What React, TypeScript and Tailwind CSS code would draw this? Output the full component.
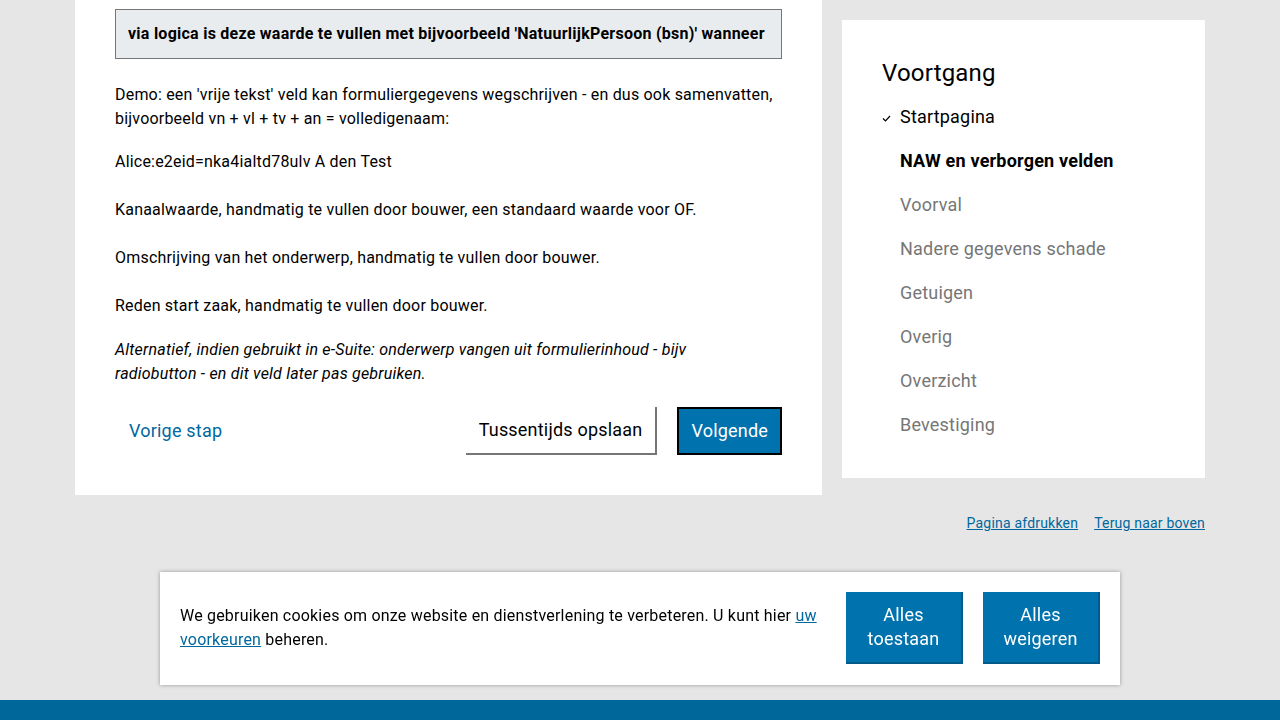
import React from 'react'

const steps = [
  { label: 'Startpagina', state: 'done' },
  { label: 'NAW en verborgen velden', state: 'current' },
  { label: 'Voorval', state: 'todo' },
  { label: 'Nadere gegevens schade', state: 'todo' },
  { label: 'Getuigen', state: 'todo' },
  { label: 'Overig', state: 'todo' },
  { label: 'Overzicht', state: 'todo' },
  { label: 'Bevestiging', state: 'todo' },
]

function Check() {
  return (
    <svg width="9" height="7" viewBox="0 0 9 7" className="mt-[3px]">
      <path d="M1 3.5 L3.5 6 L8 1" fill="none" stroke="#000" strokeWidth="1.2" />
    </svg>
  )
}

export default function App() {
  return (
    <div className="h-[720px] overflow-hidden bg-[#e6e6e6] font-['Roboto',sans-serif] tracking-[0.2px] text-black">
      <div className="mx-auto flex w-[1130px] items-start gap-5">
        {/* main form */}
        <main className="w-[747px] bg-white px-10 pb-10 pt-[9px]">
          <div className="overflow-hidden whitespace-nowrap border border-[#767676] bg-[#e9ecef] px-3 py-[12px] text-base font-bold leading-6 tracking-[0.25px]">
            via logica is deze waarde te vullen met bijvoorbeeld 'NatuurlijkPersoon (bsn)' wanneer
          </div>

          <p className="mt-6 text-base leading-6">
            Demo: een 'vrije tekst' veld kan formuliergegevens wegschrijven - en dus ook samenvatten,
            bijvoorbeeld vn + vl + tv + an = volledigenaam:
          </p>

          <div className="mt-[19px] space-y-6 text-base leading-6">
            <p>Alice:e2eid=nka4ialtd78ulv A den Test</p>
            <p>Kanaalwaarde, handmatig te vullen door bouwer, een standaard waarde voor OF.</p>
            <p>Omschrijving van het onderwerp, handmatig te vullen door bouwer.</p>
            <p>Reden start zaak, handmatig te vullen door bouwer.</p>
          </div>

          <p className="mt-5 text-base italic leading-6">
            Alternatief, indien gebruikt in e-Suite: onderwerp vangen uit formulierinhoud - bijv
            <br />
            radiobutton - en dit veld later pas gebruiken.
          </p>

          <div className="mt-[21px] flex items-center">
            <a href="#" className="px-[14px] text-lg text-[#00689e]">Vorige stap</a>
            <div className="ml-auto flex items-center gap-5">
              <button className="h-12 border-b-2 border-r-2 border-[#767676] bg-white px-[13px] text-lg">
                Tussentijds opslaan
              </button>
              <button className="h-12 border-2 border-black bg-[#0073ae] px-3 text-lg text-white">
                Volgende
              </button>
            </div>
          </div>
        </main>

        {/* progress sidebar */}
        <aside className="mt-5 w-[363px] bg-white px-10 pb-[31px] pt-[37px]">
          <h2 className="text-2xl leading-8">Voortgang</h2>
          <ul className="mt-[6px]">
            {steps.map((s) => (
              <li key={s.label} className="flex h-11 items-center text-lg">
                <span className="flex w-[18px] items-center">{s.state === 'done' && <Check />}</span>
                <span
                  className={
                    s.state === 'current'
                      ? 'font-bold text-black'
                      : s.state === 'done'
                        ? 'text-black'
                        : 'text-[#767676]'
                  }
                >
                  {s.label}
                </span>
              </li>
            ))}
          </ul>
        </aside>
      </div>

      <div className="mx-auto mt-[18px] flex w-[1130px] justify-end gap-4 text-sm leading-5">
        <a href="#" className="text-[#00689e] underline">Pagina afdrukken</a>
        <a href="#" className="text-[#00689e] underline">Terug naar boven</a>
      </div>

      <div className="mt-[167px] h-10 bg-[#00679a]" />

      {/* cookie banner */}
      <div className="fixed bottom-[35px] left-1/2 flex w-[960px] -translate-x-1/2 items-center gap-5 bg-white px-5 pb-[21px] pt-5 shadow-[0_0_4px_rgba(0,0,0,0.35)]">
        <p className="flex-1 text-base leading-6">
          We gebruiken cookies om onze website en dienstverlening te verbeteren. U kunt hier{' '}
          <a href="#" className="text-[#00689e] underline">uw voorkeuren</a> beheren.
        </p>
        <button className="h-[72px] w-[117px] border-b-2 border-r-2 border-[#005b8a] bg-[#0073ae] text-lg leading-6 text-white">
          Alles
          <br />
          toestaan
        </button>
        <button className="h-[72px] w-[117px] border-b-2 border-r-2 border-[#005b8a] bg-[#0073ae] text-lg leading-6 text-white">
          Alles
          <br />
          weigeren
        </button>
      </div>
    </div>
  )
}
